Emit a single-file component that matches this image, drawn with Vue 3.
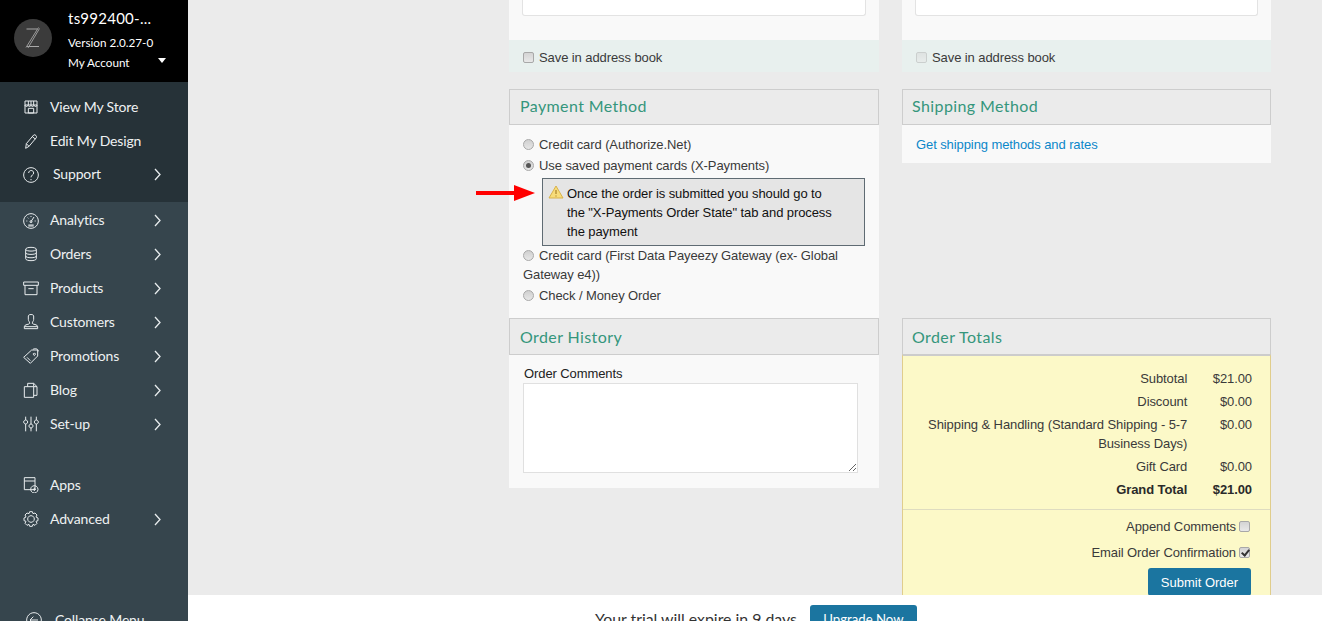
<script setup>
const icons = {
  store: ['M3 3h18v18H3z', 'M3 9h18', 'M3 9c0 3 4.500 3 4.500 0c0 3 4.500 3 4.500 0c0 3 4.500 3 4.500 0c0 3 4.500 3 4.500 0', 'M8 14h8v7H8z', 'M8 3v6M12 3v6M16 3v6'],
  pencil: ['M5 16L16 3c1.500-1.500 5.500 1.500 4 4L9 20l-5 3z', 'M14 5.500l4.500 3.500', 'M5 16l4 4'],
  help: ['M12 1a11 11 0 1 0 .01 0z', 'M8.500 9c0-5 7.500-5 7.500 0c0 3-4 3-4 6.500', 'M12 18v1.800'],
  gauge: ['M12 1a11 11 0 1 0 .01 0z', 'M12 13L16.500 6', 'M8 18h8M8 19.500h8', 'M5 12h1.500M7 7l1 1M12 4.500v1.500M19 12h-1.500', 'M10.500 13a1.500 1.500 0 1 0 3 0a1.500 1.500 0 1 0-3 0'],
  db: ['M4 5c0-4 16-4 16 0v14c0 4-16 4-16 0z', 'M4 5c0 3.500 16 3.500 16 0', 'M4 10c0 3.500 16 3.500 16 0', 'M4 15c0 3.500 16 3.500 16 0'],
  box: ['M1 3h22v5H1z', 'M3 8v14h18V8', 'M8 13h8'],
  user: ['M8 3c0-3 8-3 8 0v5c0 3-2 3-2 6c0 2 8 1 8 5v3H2v-3c0-4 8-3 8-5c0-3-2-3-2-6z', 'M2 19h20'],
  tag: ['M1 14L13 3h9v9L11 23z', 'M17 8a1.500 1.500 0 1 0 .01 0', 'M15 2c3-2 8-1 8 3', 'M6 14l5 5'],
  blog: ['M2 7h14v16H2z', 'M7 7V2h9l5 5v13h-5', 'M16 2v5h5'],
  sliders: ['M4 1v5M4 12v11M12 1v11M12 18v5M20 1v5M20 12v11', 'M4 6a3 3 0 1 0 .01 0z', 'M12 12a3 3 0 1 0 .01 0z', 'M20 6a3 3 0 1 0 .01 0z'],
  apps: ['M2 1h16v18H2z', 'M2 6h16', 'M17 13a5.500 5.500 0 1 0 .01 0z', 'M17 16v5M14.500 18.500h5'],
  gear: ['M10 1h4l1 3l3-1l3 3l-1.500 3l3 1.500v4l-3 1l1.500 3l-3 3l-3-1.500l-1 3h-4l-1-3l-3 1.500l-3-3l1.500-3l-3-1v-4l3-1.500L3 6l3-3l3 1z', 'M12 7a5 5 0 1 0 .01 0z'],
  back: ['M12 1a11 11 0 1 0 .01 0z', 'M18 12H6M11 7l-5 5l5 5']
}
const topItems = [
  { label: 'View My Store', icon: 'store' },
  { label: 'Edit My Design', icon: 'pencil' },
  { label: 'Support', icon: 'help', chevron: true, wide: true }
]
const mainItems = [
  { label: 'Analytics', icon: 'gauge', chevron: true },
  { label: 'Orders', icon: 'db', chevron: true },
  { label: 'Products', icon: 'box', chevron: true },
  { label: 'Customers', icon: 'user', chevron: true },
  { label: 'Promotions', icon: 'tag', chevron: true },
  { label: 'Blog', icon: 'blog', chevron: true },
  { label: 'Set-up', icon: 'sliders', chevron: true }
]
const lowerItems = [
  { label: 'Apps', icon: 'apps' },
  { label: 'Advanced', icon: 'gear', chevron: true }
]
const totals = [
  { label: 'Subtotal', value: '$21.00' },
  { label: 'Discount', value: '$0.00' },
  { label: 'Shipping & Handling (Standard Shipping - 5-7 Business Days)', value: '$0.00' },
  { label: 'Gift Card', value: '$0.00' },
  { label: 'Grand Total', value: '$21.00', bold: true }
]
</script>

<template>
  <div class="app">
    <aside class="sidebar">
      <header class="account">
        <svg class="logo" width="38" height="38" viewBox="0 0 38 38">
          <circle cx="19" cy="19" r="19" fill="#3b3b3b" />
          <path d="M12.500 10h11M13 27.500h12" fill="none" stroke="#a8a8a8" stroke-width="1.200" />
          <path d="M24.500 8.500L12 28.500M25.500 9.500L14 29" fill="none" stroke="#9a9a9a" stroke-width="1" />
        </svg>
        <div class="account-text">
          <div class="store-name">ts992400-...</div>
          <div class="version">Version 2.0.27-0</div>
          <div class="my-account">My Account <span class="caret"></span></div>
        </div>
      </header>

      <nav class="group group-dark">
        <a v-for="item in topItems" :key="item.label" class="nav-row" :class="{ wide: item.wide }">
          <svg class="nav-icon" viewBox="0 0 24 24"><path v-for="d in icons[item.icon]" :key="d" :d="d" /></svg>
          <span class="nav-label">{{ item.label }}</span>
          <svg v-if="item.chevron" class="chevron" viewBox="0 0 7 13"><path d="M1 1l5 5.500l-5 5.500" /></svg>
        </a>
      </nav>

      <nav class="group group-main">
        <a v-for="item in mainItems" :key="item.label" class="nav-row">
          <svg class="nav-icon" viewBox="0 0 24 24"><path v-for="d in icons[item.icon]" :key="d" :d="d" /></svg>
          <span class="nav-label">{{ item.label }}</span>
          <svg class="chevron" viewBox="0 0 7 13"><path d="M1 1l5 5.500l-5 5.500" /></svg>
        </a>
        <div class="nav-spacer"></div>
        <a v-for="item in lowerItems" :key="item.label" class="nav-row">
          <svg class="nav-icon" viewBox="0 0 24 24"><path v-for="d in icons[item.icon]" :key="d" :d="d" /></svg>
          <span class="nav-label">{{ item.label }}</span>
          <svg v-if="item.chevron" class="chevron" viewBox="0 0 7 13"><path d="M1 1l5 5.500l-5 5.500" /></svg>
        </a>
        <a class="nav-row collapse">
          <svg class="nav-icon" viewBox="0 0 24 24"><path v-for="d in icons.back" :key="d" :d="d" /></svg>
          <span class="nav-label">Collapse Menu</span>
        </a>
      </nav>
    </aside>

    <main class="main">
      <div class="columns">
        <section class="address-card">
          <div class="address-field"><div class="fake-input"></div></div>
          <label class="save-band"><input class="check" type="checkbox" /> Save in address book</label>
        </section>
        <section class="address-card">
          <div class="address-field"><div class="fake-input"></div></div>
          <label class="save-band muted"><input class="check" type="checkbox" disabled /> Save in address book</label>
        </section>

        <section class="panel payment">
          <h2 class="panel-title">Payment Method</h2>
          <div class="payment-body">
            <label class="option"><input class="radio" type="radio" name="pay" /> Credit card (Authorize.Net)</label>
            <label class="option"><input class="radio" type="radio" name="pay" checked /> Use saved payment cards (X-Payments)</label>
            <div class="notice">
              <svg class="warn" width="16" height="14" viewBox="0 0 16 14">
                <path d="M8 1L15 13H1z" fill="#f7dc7a" stroke="#d9b24a" stroke-width="1" stroke-linejoin="round" />
                <path d="M8 5v4M8 10.500v1" stroke="#a9812a" stroke-width="1.200" />
              </svg>
              <p>Once the order is submitted you should go to the "X-Payments Order State" tab and process the payment</p>
            </div>
            <label class="option"><input class="radio" type="radio" name="pay" /> Credit card (First Data Payeezy Gateway (ex- Global Gateway e4))</label>
            <label class="option"><input class="radio" type="radio" name="pay" /> Check / Money Order</label>
          </div>
          <svg class="arrow" width="60" height="20" viewBox="0 0 60 20">
            <path d="M0 8h40v4H0z" fill="#f00" />
            <path d="M38 2l21 8l-21 8z" fill="#f00" />
          </svg>
        </section>

        <section class="panel shipping">
          <h2 class="panel-title">Shipping Method</h2>
          <div class="shipping-body"><a class="link">Get shipping methods and rates</a></div>
        </section>

        <section class="panel history">
          <h2 class="panel-title tall">Order History</h2>
          <div class="history-body">
            <label class="comments-label">Order Comments</label>
            <textarea class="comments"></textarea>
          </div>
        </section>

        <section class="panel totals">
          <h2 class="panel-title tall">Order Totals</h2>
          <div class="totals-body">
            <div class="totals-rows">
              <div v-for="row in totals" :key="row.label" class="total-row" :class="{ bold: row.bold }">
                <span class="total-label">{{ row.label }}</span>
                <span class="total-value">{{ row.value }}</span>
              </div>
            </div>
            <div class="totals-actions">
              <label class="action-row">Append Comments <input class="check" type="checkbox" /></label>
              <label class="action-row">Email Order Confirmation <input class="check" type="checkbox" checked /></label>
              <button class="submit" type="button">Submit Order</button>
            </div>
          </div>
        </section>
      </div>

      <div class="trial-bar">
        <span>Your trial will expire in 9 days</span>
        <button class="upgrade" type="button">Upgrade Now</button>
      </div>
    </main>
  </div>
</template>

<style>
html, body { margin: 0; height: 100%; overflow: hidden; }
</style>

<style scoped>
.app {
  display: flex;
  width: 1322px;
  height: 621px;
  overflow: hidden;
  font-family: "Liberation Sans", Arial, sans-serif;
  font-size: 13px;
  letter-spacing: -.09px;
  color: #3a3a3a;
}

/* Sidebar */
.sidebar {
  flex: 0 0 188px;
  display: flex;
  flex-direction: column;
  height: 621px;
  overflow: hidden;
  background: #36454d;
  font-family: Lato, "Open Sans", sans-serif;
  letter-spacing: 0;
  color: #eef1f2;
}
.account {
  flex: none;
  height: 82px;
  box-sizing: border-box;
  background: #000;
  color: #fff;
  display: flex;
  padding: 19px 0 0 14px;
  gap: 16px;
}
.logo { flex: none; }
.account-text { flex: 1; margin-top: -12px; }
.store-name { font-size: 15px; line-height: 22px; letter-spacing: .25px; }
.version { font-size: 11.700px; line-height: 20px; margin-top: 3px; }
.my-account { font-size: 11.700px; line-height: 20px; display: flex; align-items: center; justify-content: space-between; padding-right: 22px; }
.caret {
  width: 0;
  height: 0;
  border-left: 4px solid transparent;
  border-right: 4px solid transparent;
  border-top: 5px solid #fff;
  margin-top: -3px;
}
.group { flex: none; }
.group-dark { height: 120px; box-sizing: border-box; padding-top: 8px; background: #263238; }
.group-main { padding-top: 2px; }
.group-main .nav-row:first-child { height: 33px; }
.nav-spacer { height: 27px; }
.nav-row {
  display: flex;
  align-items: center;
  height: 34px;
  padding-left: 23px;
  position: relative;
  font-size: 14px;
  letter-spacing: -.15px;
}
.nav-label { margin-top: -2px; }
.group-dark .nav-row:nth-child(3) { height: 33px; }
.nav-icon {
  width: 16px;
  height: 16px;
  margin-right: 11px;
  fill: none;
  stroke: #e8ecee;
  stroke-width: 1.500;
  flex: none;
}
.nav-row.wide .nav-icon { margin-right: 14px; }
.chevron {
  position: absolute;
  left: 153.500px;
  top: 50%;
  margin-top: -6.500px;
  width: 7px;
  height: 13px;
  fill: none;
  stroke: #e8ecee;
  stroke-width: 1.300;
}
.collapse { margin-top: 67px; padding-left: 26px; }
.collapse .nav-icon { margin-right: 13px; }

/* Main */
.main {
  flex: 1;
  position: relative;
  height: 621px;
  overflow: hidden;
  background: #ebebeb;
  padding-left: 321px;
  box-sizing: border-box;
}
.columns {
  display: grid;
  grid-template-columns: 370px 369px;
  grid-template-rows: 72px 246px auto;
  column-gap: 23px;
  width: 762px;
}
.address-card { background: #f9f9f9; }
.address-field { height: 40px; padding: 0 13px; box-sizing: border-box; }
.fake-input {
  height: 16px;
  box-sizing: border-box;
  background: #fff;
  border: 1px solid #e3e3e3;
  border-top: 0;
  border-radius: 0 0 3px 3px;
}
.save-band {
  display: flex;
  align-items: center;
  height: 32px;
  padding: 2px 0 0 14px;
  box-sizing: border-box;
  gap: 5px;
  background: #e8f0ee;
}
.check {
  appearance: none;
  width: 11px;
  height: 11px;
  margin: 1px 0 0;
  box-sizing: border-box;
  border: 1px solid #a8a8a8;
  border-radius: 2px;
  background: linear-gradient(#d4d4d4, #e8e8e8);
  position: relative;
  flex: none;
}
.check:disabled { opacity: .45; }
.check:checked::after {
  content: "";
  position: absolute;
  left: 3px;
  top: 0;
  width: 3px;
  height: 6px;
  border: solid #333;
  border-width: 0 2px 2px 0;
  transform: rotate(40deg);
}
.panel { position: relative; min-width: 0; }
.payment, .shipping { margin-top: 17px; }
.panel-title {
  margin: 0;
  height: 36px;
  box-sizing: border-box;
  border: 1px solid #cdcdcd;
  background: #ebebeb;
  padding-left: 10px;
  font-family: Lato, "Open Sans", sans-serif;
  font-size: 16px;
  font-weight: 400;
  line-height: 32px;
  letter-spacing: .4px;
  color: #35967c;
}
.shipping .panel-title, .totals .panel-title { padding-left: 9px; }
.panel-title.tall { height: 37px; line-height: 35px; }
.payment-body {
  height: 193px;
  box-sizing: border-box;
  background: #f9f9f9;
  padding: 10px 14px 0;
}
.option { display: block; line-height: 19px; margin-bottom: 2px; }
.radio {
  appearance: none;
  width: 11px;
  height: 11px;
  box-sizing: border-box;
  margin: 0 1.500px 0 0;
  vertical-align: -1px;
  border: 1px solid #a8a8a8;
  border-radius: 50%;
  background: linear-gradient(#d0d0d0, #e6e6e6);
  position: relative;
}
.radio:checked::after {
  content: "";
  position: absolute;
  left: 2px;
  top: 2px;
  width: 5px;
  height: 5px;
  border-radius: 50%;
  background: #555;
}
.notice {
  display: flex;
  box-sizing: border-box;
  margin: 3px 0 0 19px;
  width: 323px;
  height: 68px;
  border: 1px solid #5f6b73;
  background: #e5e5e5;
  padding: 5px 27px 0 5px;
  color: #111;
  line-height: 19px;
}
.notice p { margin: 0; }
.warn { flex: none; margin: 1px 3px 0 0; }
.arrow { position: absolute; left: -33px; top: 94px; }
.shipping-body {
  background: #f9f9f9;
  height: 38px;
  box-sizing: border-box;
  padding: 10px 14px 0;
  line-height: 19px;
}
.link { color: #0b87c9; }
.history-body {
  background: #f9f9f9;
  height: 133px;
  box-sizing: border-box;
  padding: 9px 21px 0 15px;
}
.comments-label { display: block; line-height: 19px; color: #222; }
.comments {
  display: block;
  box-sizing: border-box;
  width: 335px;
  height: 90px;
  border: 1px solid #e0e0e0;
  background: #fff;
  margin: 0 0 0 -1px;
}
.totals-body {
  background: #fcf9c8;
  border: solid #e0cd8c;
  border-width: 0 1px;
  border-top: 2px solid #ccc;
  margin-top: -1px;
  height: 300px;
  box-sizing: border-box;
}
.totals-rows { padding: 11px 18px 8px 0; border-bottom: 1px solid #dedcc0; }
.total-row {
  display: flex;
  justify-content: flex-end;
  line-height: 19px;
  padding: 2px 0;
}
.total-label { width: 285px; text-align: right; padding-left: 20px; box-sizing: border-box; }
.total-value { width: 65px; text-align: right; }
.total-row.bold { font-weight: 700; color: #2a2a2a; }
.totals-actions { padding: 6px 20px 0 0; display: flex; flex-direction: column; align-items: flex-end; }
.action-row { display: flex; align-items: center; gap: 3px; height: 20px; margin-bottom: 6px; }
.submit {
  width: 103px;
  height: 28px;
  margin: 0 -1px 0 0;
  border: 0;
  border-radius: 3px;
  background: #1b75a0;
  color: #fff;
  font: 13px "Liberation Sans", Arial, sans-serif;
}
.trial-bar {
  position: absolute;
  left: 0;
  right: 0;
  top: 595px;
  height: 26px;
  background: #fff;
  padding: 10px 0 0 407px;
  box-sizing: border-box;
  display: flex;
  align-items: flex-start;
  gap: 13px;
  font-family: Lato, "Open Sans", sans-serif;
  font-size: 15.850px;
  letter-spacing: 0;
  color: #333;
}
.trial-bar span { line-height: 27px; }
.upgrade {
  width: 107px;
  height: 28px;
  flex: none;
  border: 0;
  border-radius: 3px;
  background: #1b75a0;
  color: #fff;
  font: 13.200px Lato, "Open Sans", sans-serif;
  padding: 0;
}
</style>
